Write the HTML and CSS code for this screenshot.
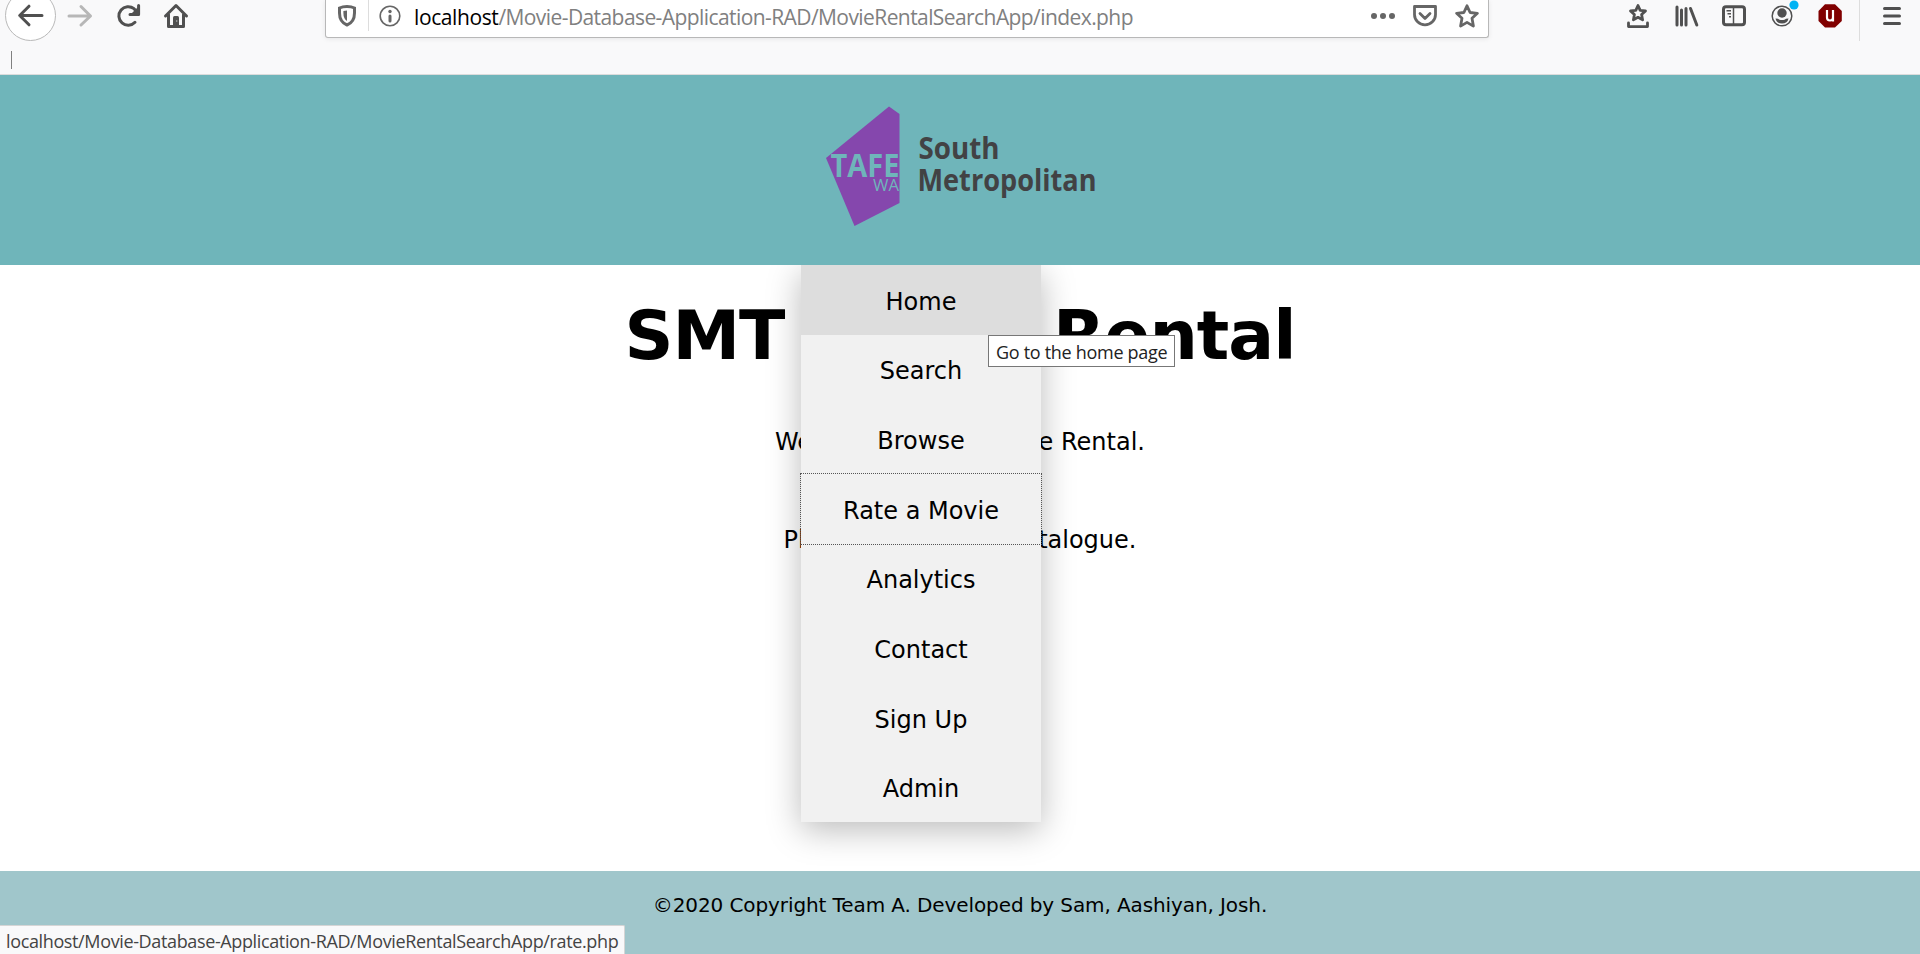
FILE: index.html
```html
<!DOCTYPE html>
<html lang="en">
<head>
<meta charset="utf-8">
<title>SMT Movie Rental</title>
<link rel="stylesheet" href="styles.css">
</head>
<body>
<div class="chrome">
  <div class="toolbar">
    <div class="nav-icons">
      <svg width="56" height="42" viewBox="0 0 56 42"><circle cx="30.5" cy="15.5" r="25" fill="#fff" stroke="#b9b9b9"/><path d="M42 15.5H20M29 6.2l-9.300 9.300L29 24.800" class="line thick"/></svg>
      <svg width="48" height="42" viewBox="56 0 48 42"><path d="M69 16H90M81 6.500L90.500 16L81 25" class="line thick pale"/></svg>
      <svg width="48" height="42" viewBox="104 0 48 42"><path d="M135 22.300A9.300 9.300 0 1 1 134 8.700L137 12" class="line thick"/><path d="M138.600 5.500V14.500H130" class="line thick"/><path d="M131 14l8-8v8z" fill="#505050"/></svg>
      <svg width="48" height="42" viewBox="152 0 48 42"><path d="M165.500 16L176 5.500L186.500 16M168.500 14.500V26.500H183.500V14.500" class="line thick"/><path d="M173 26V17.500q0-1.500 1.500-1.500h3q1.500 0 1.500 1.500V26z" fill="#505050"/><circle cx="176.700" cy="21" r=".8" fill="#bbb"/></svg>
    </div>
    <div class="urlbar">
      <div class="identity">
        <svg width="42" height="31" viewBox="326 0 42 31"><path d="M347 6.500q4.500 0 7.500 1.500v5q0 9-7.500 12q-7.500-3-7.500-12V8q3-1.500 7.500-1.500z" fill="none" stroke="#666" stroke-width="3"/><path d="M347 10.500V21q-3.600-2.300-3.600-8v-2q1.600-.5 3.600-.5z" fill="#666"/></svg>
      </div>
      <svg width="45" height="31" viewBox="369 0 45 31"><circle cx="390" cy="16" r="9.800" fill="none" stroke="#666" stroke-width="1.600"/><circle cx="390" cy="11.500" r="1.700" fill="#666"/><path d="M390 16v5" stroke="#666" stroke-width="3" stroke-linecap="round"/></svg>
      <div class="url"><span class="host">localhost</span>/Movie-Database-Application-RAD/MovieRentalSearchApp/index.php</div>
      <svg width="128" height="36" viewBox="1360 0 128 36"><g fill="#666"><circle cx="1374" cy="16" r="3"/><circle cx="1383" cy="16" r="3"/><circle cx="1392" cy="16" r="3"/></g><path d="M1414.500 6.500h21v8a10.500 10.300 0 0 1-21 0zM1420 13.500l5 5l5-5" class="line mid"/><path d="M1467 5.800l3.100 6.700l7.300.8l-5.400 5l1.400 7.800l-6.400-3.700l-6.400 3.700l1.400-7.800l-5.400-5l7.300-.8z" class="line mid"/></svg>
    </div>
    <div class="tool-icons">
      <svg width="50" height="42" viewBox="1612 0 50 42"><path d="M1638 5.500l2.200 4.800l5.300.6l-3.900 3.600l1 5.400l-4.600-2.600l-4.600 2.600l1-5.400l-3.900-3.600l5.300-.6z" class="line mid dark"/><path d="M1628.500 23v3.600h19V23" class="line mid dark"/></svg>
      <svg width="48" height="42" viewBox="1662 0 48 42"><path d="M1677 7v18M1681.500 10v15M1686 8.500v16.500M1690.500 8.500l6.300 16.500" class="line thick"/></svg>
      <svg width="48" height="42" viewBox="1710 0 48 42"><rect x="1723.500" y="6.700" width="21" height="18" rx="2.500" class="line thick"/><path d="M1733.500 7v18" stroke="#505050" stroke-width="1.500"/><path d="M1726.500 10.700h4.500M1727.500 13.700h3.500M1729 16.700h2" stroke="#505050" stroke-width="1.500"/></svg>
      <svg width="48" height="42" viewBox="1758 0 48 42"><circle cx="1782" cy="16" r="9.800" fill="none" stroke="#505050" stroke-width="1.500"/><circle cx="1782" cy="13" r="4.700" fill="#505050"/><path d="M1775.500 18.500q3 0 4 1.200q2.500.8 5 0q1-1.200 4-1.200q-1 5-6.500 5t-6.500-5z" fill="#505050"/><circle cx="1794" cy="5" r="4.600" fill="#00b3f4"/></svg>
      <svg width="48" height="42" viewBox="1806 0 48 42"><path d="M1825 4.200h10l6.800 6.800v10l-6.800 6.500h-10l-6.500-6.500V11z" fill="#800000"/><path d="M1827 10v7.500q0 3 3 3t3-3V10M1833 17v4.500" fill="none" stroke="#fff" stroke-width="2.200"/></svg>
      <svg width="66" height="42" viewBox="1854 0 66 42"><path d="M1859.500 0v41" stroke="#ddd"/><path d="M1884.500 8.500h15M1884.500 16h15M1884.500 23.500h15" class="line thick"/></svg>
    </div>
  </div>
  <div class="bookmarks"><span class="caret"></span></div>
</div>
<header class="banner">
  <svg width="280" height="130" viewBox="820 100 280 130">
    <path d="M889 106.500L899.500 114V203L854.500 226L826 158z" fill="#8547ad"/>
    <text x="830.500" y="177" textLength="69" lengthAdjust="spacingAndGlyphs" class="logo-tafe">TAFE</text>
    <text x="873" y="191" textLength="26" lengthAdjust="spacingAndGlyphs" class="logo-wa">WA</text>
    <text x="918.500" y="158.500" textLength="81" lengthAdjust="spacingAndGlyphs" class="logo-name">South</text>
    <text x="917.500" y="191" textLength="179" lengthAdjust="spacingAndGlyphs" class="logo-name">Metropolitan</text>
  </svg>
</header>
<main class="content">
  <h1>SMT Movie Rental</h1>
  <p>Welcome to SMT Movie Rental.</p>
  <p class="second">Please browse our catalogue.</p>
  <nav class="menu">
    <a class="hover">Home</a><a>Search</a><a>Browse</a><a class="focused">Rate a Movie</a><a>Analytics</a><a>Contact</a><a>Sign Up</a><a>Admin</a>
    <div class="tooltip">Go to the home page</div>
  </nav>
</main>
<footer class="footer">
  <p>©2020 Copyright Team A. Developed by Sam, Aashiyan, Josh.</p>
  <div class="status">localhost/Movie-Database-Application-RAD/MovieRentalSearchApp/rate.php</div>
</footer>
</body>
</html>
```
FILE: styles.css
```css
* { box-sizing: border-box; }
body {
  margin: 0;
  height: 954px;
  overflow: hidden;
  display: flex;
  flex-direction: column;
  background: #fff;
  color: #000;
  font: 24px/29px Verdana, "DejaVu Sans", sans-serif;
}
svg { display: block; flex: none; }
.line { fill: none; stroke: #666; stroke-linecap: round; stroke-linejoin: round; }
.thick { stroke: #505050; stroke-width: 3; }
.mid { stroke-width: 2.8; }
.dark { stroke: #505050; }
.pale { stroke: #b7b7b7; }

.chrome { height: 75px; background: #f9f9fa; border-bottom: 1px solid #dcdcdc; }
.toolbar { display: flex; justify-content: space-between; height: 42px; }
.nav-icons { display: flex; width: 325px; }
.tool-icons { display: flex; width: 308px; }
.urlbar {
  display: flex;
  width: 1164px;
  height: 38px;
  margin-right: 123px;
  background: #fff;
  border: 1px solid #b8b8b8;
  border-top: 0;
  border-radius: 0 0 3px 3px;
  box-shadow: 0 1px 5px rgba(0, 0, 0, .08);
}
.identity { height: 31px; border-right: 1px solid #ddd; }
.url {
  flex: 1;
  color: #808080;
  font: 21px/34px "Open Sans", sans-serif;
  letter-spacing: -.58px;
  white-space: nowrap;
}
.host { color: #000; letter-spacing: -.4px; }
.bookmarks { padding: 9px 11px; }
.caret { display: block; width: 1px; height: 18px; background: #808080; }

.banner { height: 190px; background: #6fb5ba; display: flex; justify-content: center; padding-top: 25px; }
.logo-tafe, .logo-wa { fill: #6fb5ba; font-family: "Open Sans", sans-serif; }
.logo-tafe { font-size: 32px; font-weight: 700; }
.logo-wa { font-size: 17px; }
.logo-name { fill: #424244; font-family: "Open Sans", sans-serif; font-size: 31px; font-weight: 700; }

.content { position: relative; height: 606px; text-align: center; padding-top: 29px; }
h1 { margin: 0; font-size: 68px; line-height: 83px; letter-spacing: -1px; }
p { margin: 0; }
.content p { padding-top: 51px; }
.content .second { padding-top: 69px; }
.menu {
  position: absolute;
  z-index: 1;
  left: 801px;
  top: 0;
  width: 240px;
  height: 557px;
  display: flex;
  flex-direction: column;
  background: #f1f1f1;
  box-shadow: 0 8px 32px rgba(0, 0, 0, .27);
  clip-path: inset(0 -200px -49px -60px);
}
.menu a { flex: 1; display: flex; align-items: center; justify-content: center; padding-top: 5px; }
.menu .hover { background: #ddd; }
.menu .focused { outline: 1px dotted #555; }
.tooltip {
  position: absolute;
  left: 187px;
  top: 70px;
  width: 187px;
  height: 32px;
  padding-left: 7px;
  border: 1px solid #777;
  background: #fff;
  color: #222;
  text-align: left;
  font: 18px/32px "Open Sans", sans-serif;
  letter-spacing: -.3px;
  white-space: nowrap;
}
.footer {
  height: 83px;
  background: #a0c6cb;
  text-align: center;
  font-size: 20px;
  line-height: 24px;
  display: flex;
  flex-direction: column;
  align-items: flex-start;
  justify-content: space-between;
}
.footer p { width: 100%; padding-top: 22px; letter-spacing: -.1px; }
.status {
  width: 625px;
  height: 29px;
  border: 1px solid #d5d5d5;
  border-width: 1px 1px 0 0;
  border-radius: 0 2px 0 0;
  padding-left: 6px;
  background: #f9f9fa;
  color: #444;
  text-align: left;
  font: 18px/31px "Open Sans", sans-serif;
  letter-spacing: -.365px;
  white-space: nowrap;
}
```
